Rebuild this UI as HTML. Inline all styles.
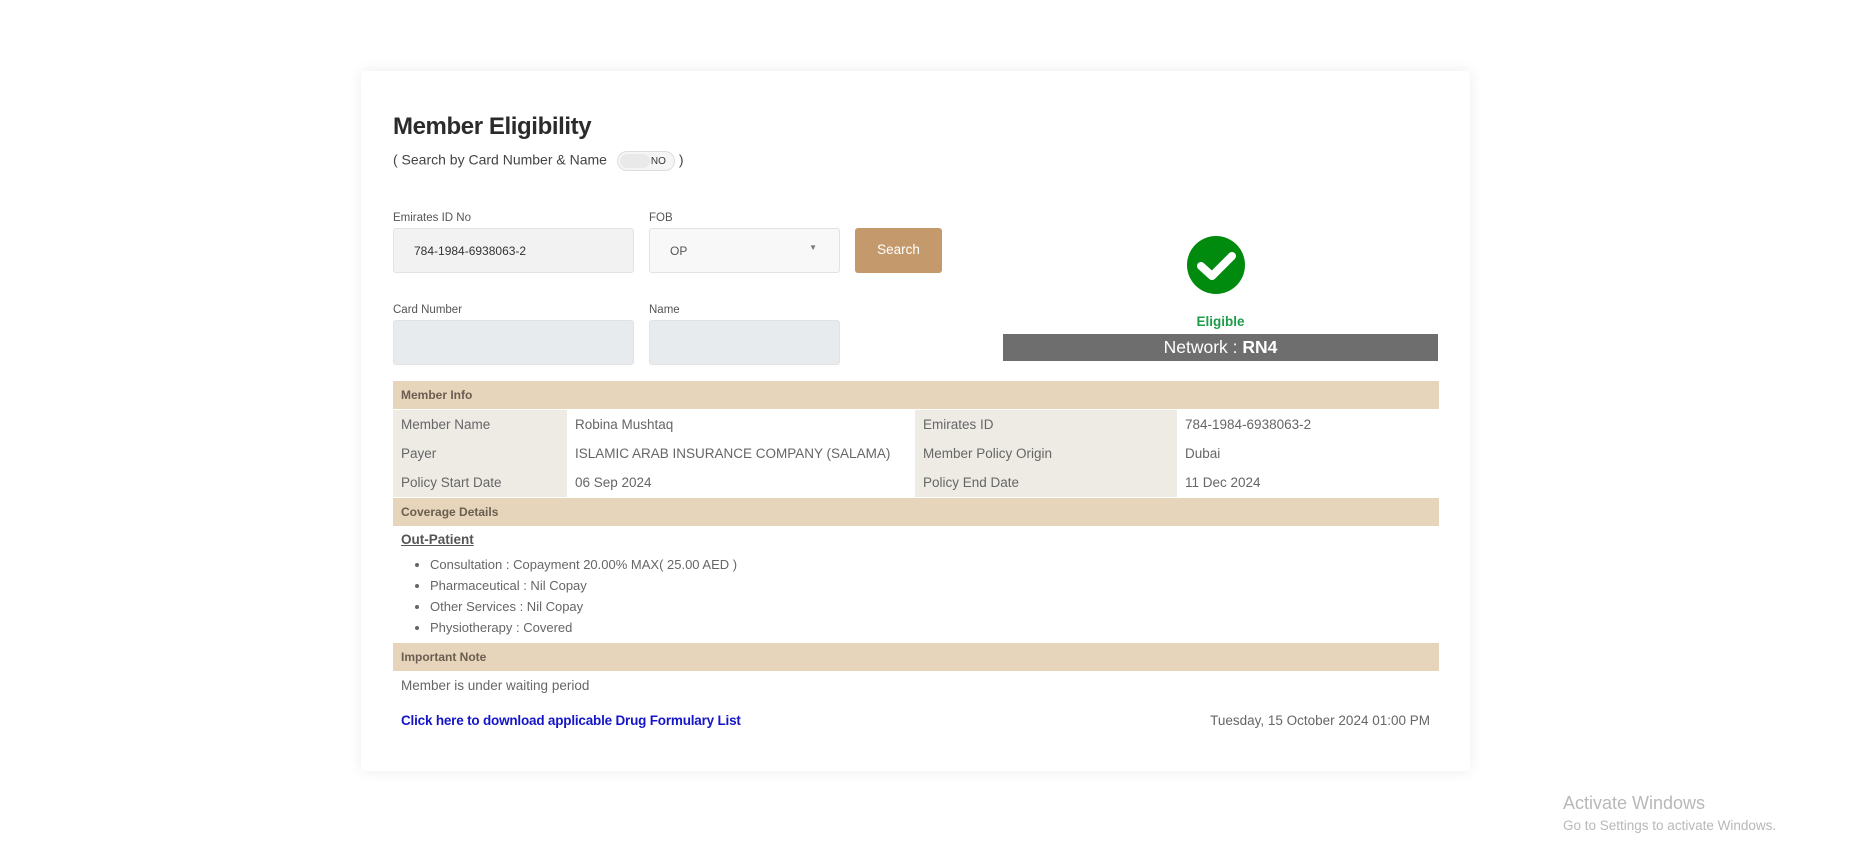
<!DOCTYPE html>
<html><head><meta charset="utf-8"><style>
*{box-sizing:border-box;margin:0;padding:0}
body{width:1868px;height:849px;background:#fff;font-family:"Liberation Sans",Arial,sans-serif;position:relative;overflow:hidden;color:#666}
.card{position:absolute;left:361px;top:71px;width:1109px;height:700px;background:#fff;box-shadow:0 0 14px rgba(0,0,0,.08);border-radius:4px}
.abs{position:absolute}
h1{position:absolute;left:393px;top:113px;font-size:24px;font-weight:bold;color:#2b2b2b;letter-spacing:-0.4px}
.sub{left:393px;top:151px;font-size:14px;color:#444}
.tog{display:inline-block;width:58px;height:20px;border:1px solid #ddd;border-radius:10px;background:#f5f5f5;vertical-align:middle;position:relative;margin:0 4px 0 6px}
.tog i{position:absolute;left:2px;top:2px;width:30px;height:14px;border-radius:8px;background:#e9e9e9}
.tog b{position:absolute;right:8px;top:4px;font-size:10px;font-weight:normal;color:#333}
.lbl{font-size:11.5px;color:#555}
.inp{border:1px solid #e2e2e2;border-radius:3px}
.btn{left:855px;top:228px;width:87px;height:45px;background:#c49a6c;border-radius:3px;color:#fff;font-size:13.5px;text-align:center;line-height:44px}
.hdr{position:absolute;left:393px;width:1046px;height:28px;background:#e6d5bb;font-size:12px;font-weight:bold;color:#6b5d50;padding-left:8px;line-height:28px}
table{position:absolute;left:393px;top:410px;width:1046px;border-collapse:collapse;font-size:13.5px;color:#666}
td{height:29px;padding-left:8px}
td.k{background:#eeebe5}
li{font-size:13px;height:21px;color:#666}
</style></head><body>
<div class="card"></div>
<h1>Member Eligibility</h1>
<div class="abs sub">( Search by Card Number &amp; Name <span class="tog"><i></i><b>NO</b></span>)</div>
<div class="abs lbl" style="left:393px;top:212px">Emirates ID No</div>
<div class="abs inp" style="left:393px;top:228px;width:241px;height:45px;background:#f2f2f2;font-size:12px;color:#333;padding:15px 0 0 20px">784-1984-6938063-2</div>
<div class="abs lbl" style="left:649px;top:212px">FOB</div>
<div class="abs inp" style="left:649px;top:228px;width:191px;height:45px;background:#f8f8f8;font-size:12px;color:#555;padding:15px 0 0 20px">OP<span style="position:absolute;right:22px;top:14px;font-size:8px;color:#777">&#9660;</span></div>
<div class="abs btn">Search</div>
<div class="abs lbl" style="left:393px;top:304px">Card Number</div>
<div class="abs inp" style="left:393px;top:320px;width:241px;height:45px;background:#e8ebee"></div>
<div class="abs lbl" style="left:649px;top:304px">Name</div>
<div class="abs inp" style="left:649px;top:320px;width:191px;height:45px;background:#e8ebee"></div>
<svg class="abs" style="left:1186px;top:235px" width="60" height="60" viewBox="0 0 60 60"><circle cx="30" cy="30" r="29" fill="#008a0e"/><path d="M15 31 L26 41 L46 21" stroke="#fff" stroke-width="8" fill="none" stroke-linecap="round" stroke-linejoin="round"/></svg>
<div class="abs" style="left:1003px;top:314px;width:435px;text-align:center;font-size:13.5px;font-weight:bold;color:#1e9c4a">Eligible</div>
<div class="abs" style="left:1003px;top:334px;width:435px;height:27px;background:#6e6e6e;color:#fff;text-align:center;font-size:17.5px;line-height:27px">Network : <b>RN4</b></div>
<div class="hdr" style="top:381px">Member Info</div>
<table>
<tr><td class="k" style="width:174px">Member Name</td><td style="width:348px">Robina Mushtaq</td><td class="k" style="width:262px">Emirates ID</td><td>784-1984-6938063-2</td></tr>
<tr><td class="k">Payer</td><td>ISLAMIC ARAB INSURANCE COMPANY (SALAMA)</td><td class="k">Member Policy Origin</td><td>Dubai</td></tr>
<tr><td class="k">Policy Start Date</td><td>06 Sep 2024</td><td class="k">Policy End Date</td><td>11 Dec 2024</td></tr>
</table>
<div class="hdr" style="top:498px">Coverage Details</div>
<div class="abs" style="left:401px;top:532px;font-size:13.5px;font-weight:bold;text-decoration:underline;color:#555">Out-Patient</div>
<ul class="abs" style="left:430px;top:557px">
<li>Consultation : Copayment 20.00% MAX( 25.00 AED )</li>
<li>Pharmaceutical : Nil Copay</li>
<li>Other Services : Nil Copay</li>
<li>Physiotherapy : Covered</li>
</ul>
<div class="hdr" style="top:643px">Important Note</div>
<div class="abs" style="left:401px;top:678px;font-size:13.5px">Member is under waiting period</div>
<div class="abs" style="left:401px;top:713px;font-size:13.5px;font-weight:bold;color:#1515c8;letter-spacing:-0.2px">Click here to download applicable Drug Formulary List</div>
<div class="abs" style="right:438px;top:713px;font-size:13.5px">Tuesday, 15 October 2024 01:00 PM</div>
<div class="abs" style="left:1563px;top:793px;font-size:18px;color:#b8b8b8">Activate Windows</div>
<div class="abs" style="left:1563px;top:818px;font-size:13.5px;color:#b8b8b8">Go to Settings to activate Windows.</div>
</body></html>
